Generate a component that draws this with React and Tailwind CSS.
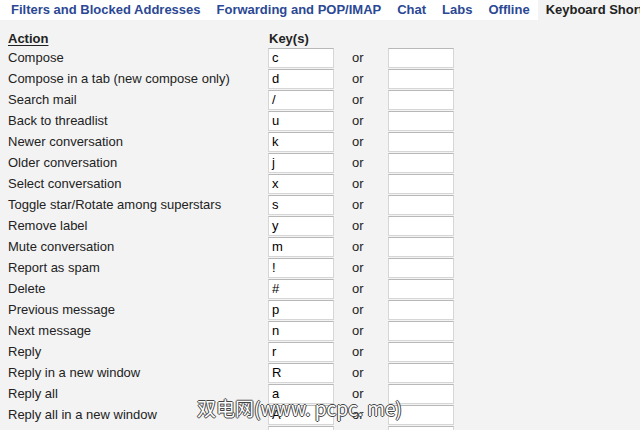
const tabs = [
  "Filters and Blocked Addresses",
  "Forwarding and POP/IMAP",
  "Chat",
  "Labs",
  "Offline",
];

const shortcuts = [
  ["Compose", "c"],
  ["Compose in a tab (new compose only)", "d"],
  ["Search mail", "/"],
  ["Back to threadlist", "u"],
  ["Newer conversation", "k"],
  ["Older conversation", "j"],
  ["Select conversation", "x"],
  ["Toggle star/Rotate among superstars", "s"],
  ["Remove label", "y"],
  ["Mute conversation", "m"],
  ["Report as spam", "!"],
  ["Delete", "#"],
  ["Previous message", "p"],
  ["Next message", "n"],
  ["Reply", "r"],
  ["Reply in a new window", "R"],
  ["Reply all", "a"],
  ["Reply all in a new window", "A"],
  ["Forward", "f"],
];

const KeyBox = ({ value }) => (
  <div className="h-[20px] w-[66px] bg-white border border-[#d6d6d6] border-t-[#b8b8b8] pl-[3px] text-[13px] leading-[18px] text-black">
    {value}
  </div>
);

export default function App() {
  return (
    <div className="relative w-[640px] h-[430px] overflow-hidden bg-[#f3f3f3] font-['Liberation_Sans',Arial,sans-serif]">
      <div className="flex h-[20px] bg-white text-[13px] font-bold leading-[20px] whitespace-nowrap overflow-hidden">
        <div className="flex shrink-0 gap-[16px] pl-[11px] pr-[8px] text-[#2b4894]">
          {tabs.map((t) => (
            <span key={t} className="shrink-0">{t}</span>
          ))}
        </div>
        <div className="shrink-0 grow bg-[#f3f3f3] pl-[8px] pr-[8px] text-[#222]">Keyboard Shortcuts</div>
      </div>

      <div className="pt-[10px] pl-[8px] text-[13px] text-[#222]">
        <div className="grid grid-cols-[260px_66px_54px_66px] h-[18px] leading-[17px] font-bold">
          <span className="underline underline-offset-2">Action</span>
          <span className="pl-[1px]">Key(s)</span>
          <span />
          <span />
        </div>
        {shortcuts.map(([action, key]) => (
          <div key={action} className="grid grid-cols-[260px_66px_54px_66px] h-[21px] items-start">
            <span className="leading-[20px]">{action}</span>
            <KeyBox value={key} />
            <span className="pl-[18px] leading-[20px]">or</span>
            <KeyBox value="" />
          </div>
        ))}
      </div>

      <div className="absolute left-[197px] top-[396px] text-[19px] leading-[24px] text-white font-['Noto_Sans_CJK_SC','Liberation_Sans',sans-serif] [text-shadow:-1px_0_#444,1px_0_#444,0_1px_#444,0_-1px_#444]">
        双电网(www. pcpc. me)
      </div>
    </div>
  );
}
